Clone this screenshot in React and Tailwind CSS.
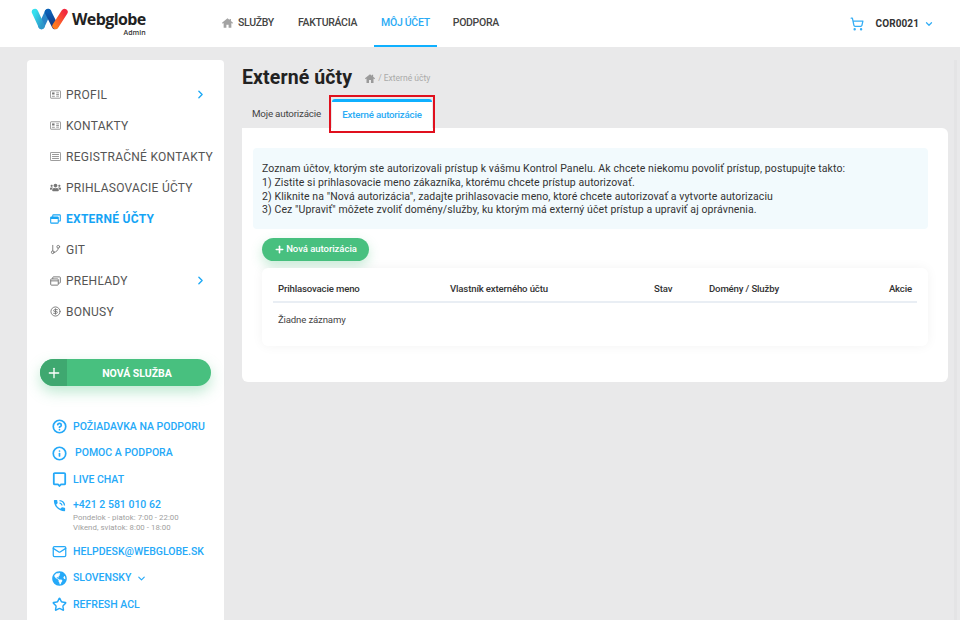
import React from "react";
import { ChevronRight, ChevronDown, ShoppingCart, Plus, Mail, Star, CircleHelp, Info, GitBranch, CircleDollarSign } from "lucide-react";
import { FaUsers, FaGlobeAmericas } from "react-icons/fa";
import { MdPhoneInTalk } from "react-icons/md";

const House = ({ className }) => (
  <svg viewBox="0 0 16 14" className={className} fill="currentColor"><path d="M8 0 0 6.6 1 8l1.4-1.1V14h4V9.5h3.2V14h4V6.9L15 8l1-1.4-3-2.4V1h-2v1.6z" /></svg>
);

const Windows = ({ className }) => (
  <svg viewBox="0 0 16 14" className={className} fill="none" stroke="currentColor" strokeWidth="1.4"><rect x="1" y="4" width="11" height="9" rx="1" /><path d="M4 4V2a1 1 0 0 1 1-1h9a1 1 0 0 1 1 1v7a1 1 0 0 1-1 1h-2" /><path d="M1 6.8h11" /></svg>
);

const WindowsActive = ({ className }) => (
  <svg viewBox="0 0 16 14" className={className} fill="none" stroke="currentColor" strokeWidth="1.5"><rect x="1" y="4" width="11" height="9" rx="1" /><path d="M4 4V2a1 1 0 0 1 1-1h9a1 1 0 0 1 1 1v7a1 1 0 0 1-1 1h-2" /><path d="M1 5.5h11" strokeWidth="3" /></svg>
);

const Card = ({ className }) => (
  <svg viewBox="0 0 16 12" className={className} fill="none" stroke="currentColor" strokeWidth="1.1"><rect x="0.6" y="0.6" width="14.8" height="10.8" rx="1" /><rect x="3" y="3" width="3.6" height="3" fill="currentColor" stroke="none" /><path d="M2.8 8.6h4.2M9 3.6h4M9 6h4M9 8.4h4" /></svg>
);

const Lines = ({ className }) => (
  <svg viewBox="0 0 16 13" className={className} fill="none" stroke="currentColor" strokeWidth="1.1"><rect x="0.6" y="0.6" width="14.8" height="11.8" rx="1" /><path d="M3 3.6h10M3 6.5h10M3 9.4h10" /></svg>
);

const Bubble = ({ size = 15 }) => (
  <svg viewBox="0 0 15 15" width={size} height={size} fill="none" stroke="currentColor" strokeWidth="1.8" strokeLinejoin="round"><path d="M2.8 1.2h9.4a1 1 0 0 1 1 1v9.2a1 1 0 0 1-1 1H9L7.5 14 6 12.4H2.8a1 1 0 0 1-1-1V2.2a1 1 0 0 1 1-1z" /></svg>
);

const Logo = () => (
  <svg viewBox="0 0 37 22" className="w-[37px] h-[22px] shrink-0">
    <defs>
      <linearGradient id="lg1" x1="0" y1="0" x2="1" y2="1"><stop offset="0" stopColor="#35e0ee" /><stop offset="1" stopColor="#2d97c9" /></linearGradient>
      <linearGradient id="lg2" x1="0" y1="0" x2="0" y2="1"><stop offset="0" stopColor="#0b5fb5" /><stop offset="1" stopColor="#14357f" /></linearGradient>
      <linearGradient id="lg3" x1="1" y1="0" x2="0" y2="1"><stop offset="0" stopColor="#f2293f" /><stop offset="1" stopColor="#ff7a1f" /></linearGradient>
    </defs>
    <path d="M17 4 10.5 18" stroke="#2b86c8" strokeWidth="6.4" strokeLinecap="round" />
    <path d="M4 4 10.5 18" stroke="url(#lg1)" strokeWidth="6.4" strokeLinecap="round" />
    <path d="M17 4 24 18" stroke="url(#lg2)" strokeWidth="6.4" strokeLinecap="round" />
    <path d="M24.5 18 33.5 4" stroke="url(#lg3)" strokeWidth="6.4" strokeLinecap="round" />
  </svg>
);

function NavItem({ children, active, className = "" }) {
  return (
    <div className={`h-[47px] flex items-center border-b-2 px-[7px] text-[10.5px] tracking-[-0.3px] font-medium ${active ? "text-[#2aabf5] border-[#0fb0ff]" : "text-[#444] border-transparent"} ${className}`}>
      {children}
    </div>
  );
}

function Side({ icon: Icon, iconClass = "w-[11px] h-[9px]", label, chevron, active }) {
  return (
    <div className={`h-[31px] flex items-center pl-[23px] pr-[17px] text-[12px] tracking-[0.26px] ${active ? "text-[#15a4f5] font-bold" : "text-[#555]"}`}>
      <span className={`w-[16px] flex items-center shrink-0 ${active ? "text-[#15a4f5]" : "text-[#777]"}`}><Icon className={iconClass} /></span>
      <span className="flex-1 whitespace-nowrap">{label}</span>
      {chevron && <ChevronRight size={13} strokeWidth={2.5} className="text-[#1da9f5]" />}
    </div>
  );
}

function LinkRow({ icon: Icon, label, textClass = "", strokeWidth = 2.7 }) {
  return (
    <div className="h-[26.5px] flex items-center text-[10.5px] font-medium text-[#25a9f8]">
      <span className="w-[21px] shrink-0"><Icon size={15} strokeWidth={strokeWidth} /></span>
      <span className={`whitespace-nowrap ${textClass}`}>{label}</span>
    </div>
  );
}

export default function App() {
  return (
    <div className="relative w-[960px] h-[620px] overflow-hidden bg-[#e9e9ea] flex flex-col font-['Roboto',sans-serif]">
      <header className="h-[47px] bg-white flex items-start shrink-0">
        <div className="w-[215px] pl-[31px] pt-[8px] flex items-start">
          <Logo />
          <div className="ml-[4px] flex flex-col items-end">
            <span className="text-[16px] leading-[19px] mt-[2px] font-bold text-[#222] font-['Open_Sans',sans-serif] tracking-[-0.6px]">Webglobe</span>
            <span className="text-[7px] leading-[8px] font-semibold text-[#333] font-['Open_Sans',sans-serif]">Admin</span>
          </div>
        </div>
        <nav className="flex items-start">
          <NavItem><House className="w-[11px] h-[10px] text-[#a3a3a3] mr-[5px]" />SLUŽBY</NavItem>
          <NavItem className="ml-[10px]">FAKTURÁCIA</NavItem>
          <NavItem active className="ml-[10px]">MÔJ ÚČET</NavItem>
          <NavItem className="ml-[9px]">PODPORA</NavItem>
        </nav>
        <div className="ml-auto h-[47px] pr-[26px] flex items-center">
          <ShoppingCart size={14} strokeWidth={2.2} className="text-[#35aef5] mr-[12px]" />
          <span className="text-[10px] font-bold text-[#333] tracking-[0.1px]">COR0021</span>
          <ChevronDown size={10} strokeWidth={3} className="text-[#35aef5] ml-[5px]" />
        </div>
      </header>

      <div className="flex-1 flex items-start pt-[13px] pl-[27px]">
        <aside className="w-[197px] h-[600px] bg-white rounded-[4px] shrink-0 pt-[19px]">
          <Side icon={Card} label="PROFIL" chevron />
          <Side icon={Card} label="KONTAKTY" />
          <Side icon={Lines} label="REGISTRAČNÉ KONTAKTY" />
          <Side icon={FaUsers} iconClass="w-[11px] h-[11px]" label="PRIHLASOVACIE ÚČTY" />
          <Side icon={WindowsActive} iconClass="w-[11px] h-[10px]" label="EXTERNÉ ÚČTY" active />
          <Side icon={GitBranch} iconClass="w-[11px] h-[11px]" label="GIT" />
          <Side icon={Windows} iconClass="w-[11px] h-[10px]" label="PREHĽADY" chevron />
          <Side icon={CircleDollarSign} iconClass="w-[11px] h-[11px]" label="BONUSY" />

          <div className="mt-[32px] mx-[13px] h-[27px] w-[171px] rounded-full bg-[#48c07f] flex overflow-hidden shadow-[0_6px_14px_rgba(72,192,127,0.35)]">
            <div className="w-[27px] bg-[#3fa870] flex items-center justify-center pl-[1px] shrink-0">
              <Plus size={16} strokeWidth={2} className="text-white" />
            </div>
            <div className="flex-1 flex items-center justify-center pt-[2px] pr-[4px] text-white text-[10.5px] font-bold">NOVÁ SLUŽBA</div>
          </div>

          <div className="mt-[27.5px] pl-[25px]">
            <LinkRow icon={CircleHelp} label="POŽIADAVKA NA PODPORU" />
            <LinkRow icon={Info} label="POMOC A PODPORA" textClass="ml-[2px]" />
            <LinkRow icon={Bubble} label="LIVE CHAT" />
            <div className="flex text-[#25a9f8] pt-[5px]">
              <span className="w-[21px] shrink-0"><MdPhoneInTalk size={15} /></span>
              <div className="flex flex-col">
                <span className="text-[10.5px] leading-[14px] font-medium">+421 2 581 010 62</span>
                <span className="text-[7.8px] leading-[10px] mt-[1px] text-[#a0a0a0] tracking-[0.05px]">Pondelok - piatok: 7:00 - 22:00</span>
                <span className="text-[7.8px] leading-[10px] text-[#a0a0a0] tracking-[0.05px]">Víkend, sviatok: 8:00 - 18:00</span>
              </div>
            </div>
            <div className="h-[5.5px]" />
            <LinkRow icon={Mail} label="HELPDESK@WEBGLOBE.SK" strokeWidth={2} />
            <LinkRow icon={FaGlobeAmericas} label={<span className="inline-flex items-center">SLOVENSKY<ChevronDown size={11} strokeWidth={2.5} className="ml-[5px]" /></span>} />
            <LinkRow icon={Star} label="REFRESH ACL" strokeWidth={2.3} />
          </div>
        </aside>

        <main className="w-[706px] ml-[18px] shrink-0">
          <div className="flex items-center h-[36px]">
            <h1 className="text-[19.5px] font-bold text-[#222] tracking-[0.1px]">Externé účty</h1>
            <House className="w-[10px] h-[9px] text-[#9a9a9a] ml-[13px]" />
            <span className="text-[8.5px] text-[#a9a9a9] ml-[3px] mt-[1px]">/ Externé účty</span>
          </div>
          <div className="flex items-end h-[32px]">
            <div className="h-[31px] w-[89px] flex items-center pl-[10px] pt-[3px] text-[9.8px] tracking-[-0.2px] text-[#444] whitespace-nowrap">Moje autorizácie</div>
            <div className="relative h-[29px] w-[100px] bg-white border-t-[3px] border-[#0fb0ff] rounded-t-[3px] flex items-center justify-center text-[9.7px] tracking-[-0.2px] font-medium text-[#2aabf5] ml-[1px] whitespace-nowrap">
              Externé autorizácie
              <div className="absolute left-[-3px] top-[-7px] w-[106px] h-[38px] border-2 border-[#e0101e] pointer-events-none" />
            </div>
          </div>
          <section className="bg-white rounded-[6px] rounded-tl-none h-[254px] pt-[20px] pl-[11px] pr-[20px]">
            <div className="h-[81px] bg-[#f2fafd] rounded-[4px] pl-[9px] pt-[14px] text-[10.5px] leading-[13.8px] text-[#333] tracking-[0.1px]">
              <p>Zoznam účtov, ktorým ste autorizovali prístup k vášmu Kontrol Panelu. Ak chcete niekomu povoliť prístup, postupujte takto:</p>
              <p>1) Zistite si prihlasovacie meno zákazníka, ktorému chcete prístup autorizovať.</p>
              <p className="tracking-[0.1px]">2) Kliknite na "Nová autorizácia", zadajte prihlasovacie meno, ktoré chcete autorizovať a vytvorte autorizaciu</p>
              <p>3) Cez "Upraviť" môžete zvoliť domény/služby, ku ktorým má externý účet prístup a upraviť aj oprávnenia.</p>
            </div>
            <div className="ml-[9px] mt-[9px] w-[107px] h-[23px] rounded-full bg-[#48c07f] text-white text-[9.5px] tracking-[-0.03px] font-medium flex items-center justify-center shadow-[0_5px_12px_rgba(72,192,127,0.3)]">
              <Plus size={11} strokeWidth={3.5} className="mr-[1px]" />Nová autorizácia
            </div>
            <div className="ml-[9px] mt-[7px] h-[78px] rounded-[6px] bg-white shadow-[0_0_12px_rgba(0,0,0,0.05)] px-[11px] text-[9.6px] tracking-[-0.15px]">
              <div className="h-[35px] border-b-2 border-[#e9eef4] flex items-center font-medium text-[#333] pt-[9px] pr-[5px]">
                <span className="w-[177px] pl-[5px]">Prihlasovacie meno</span>
                <span className="w-[204px]">Vlastník externého účtu</span>
                <span className="w-[55px]">Stav</span>
                <span className="flex-1">Domény / Služby</span>
                <span>Akcie</span>
              </div>
              <div className="pt-[10px] pl-[5px] text-[#444]">Žiadne záznamy</div>
            </div>
          </section>
        </main>
      </div>
      <div className="absolute right-[3px] top-[60px] bottom-0 w-[3px] bg-[#e4e4e5]" />
    </div>
  );
}
